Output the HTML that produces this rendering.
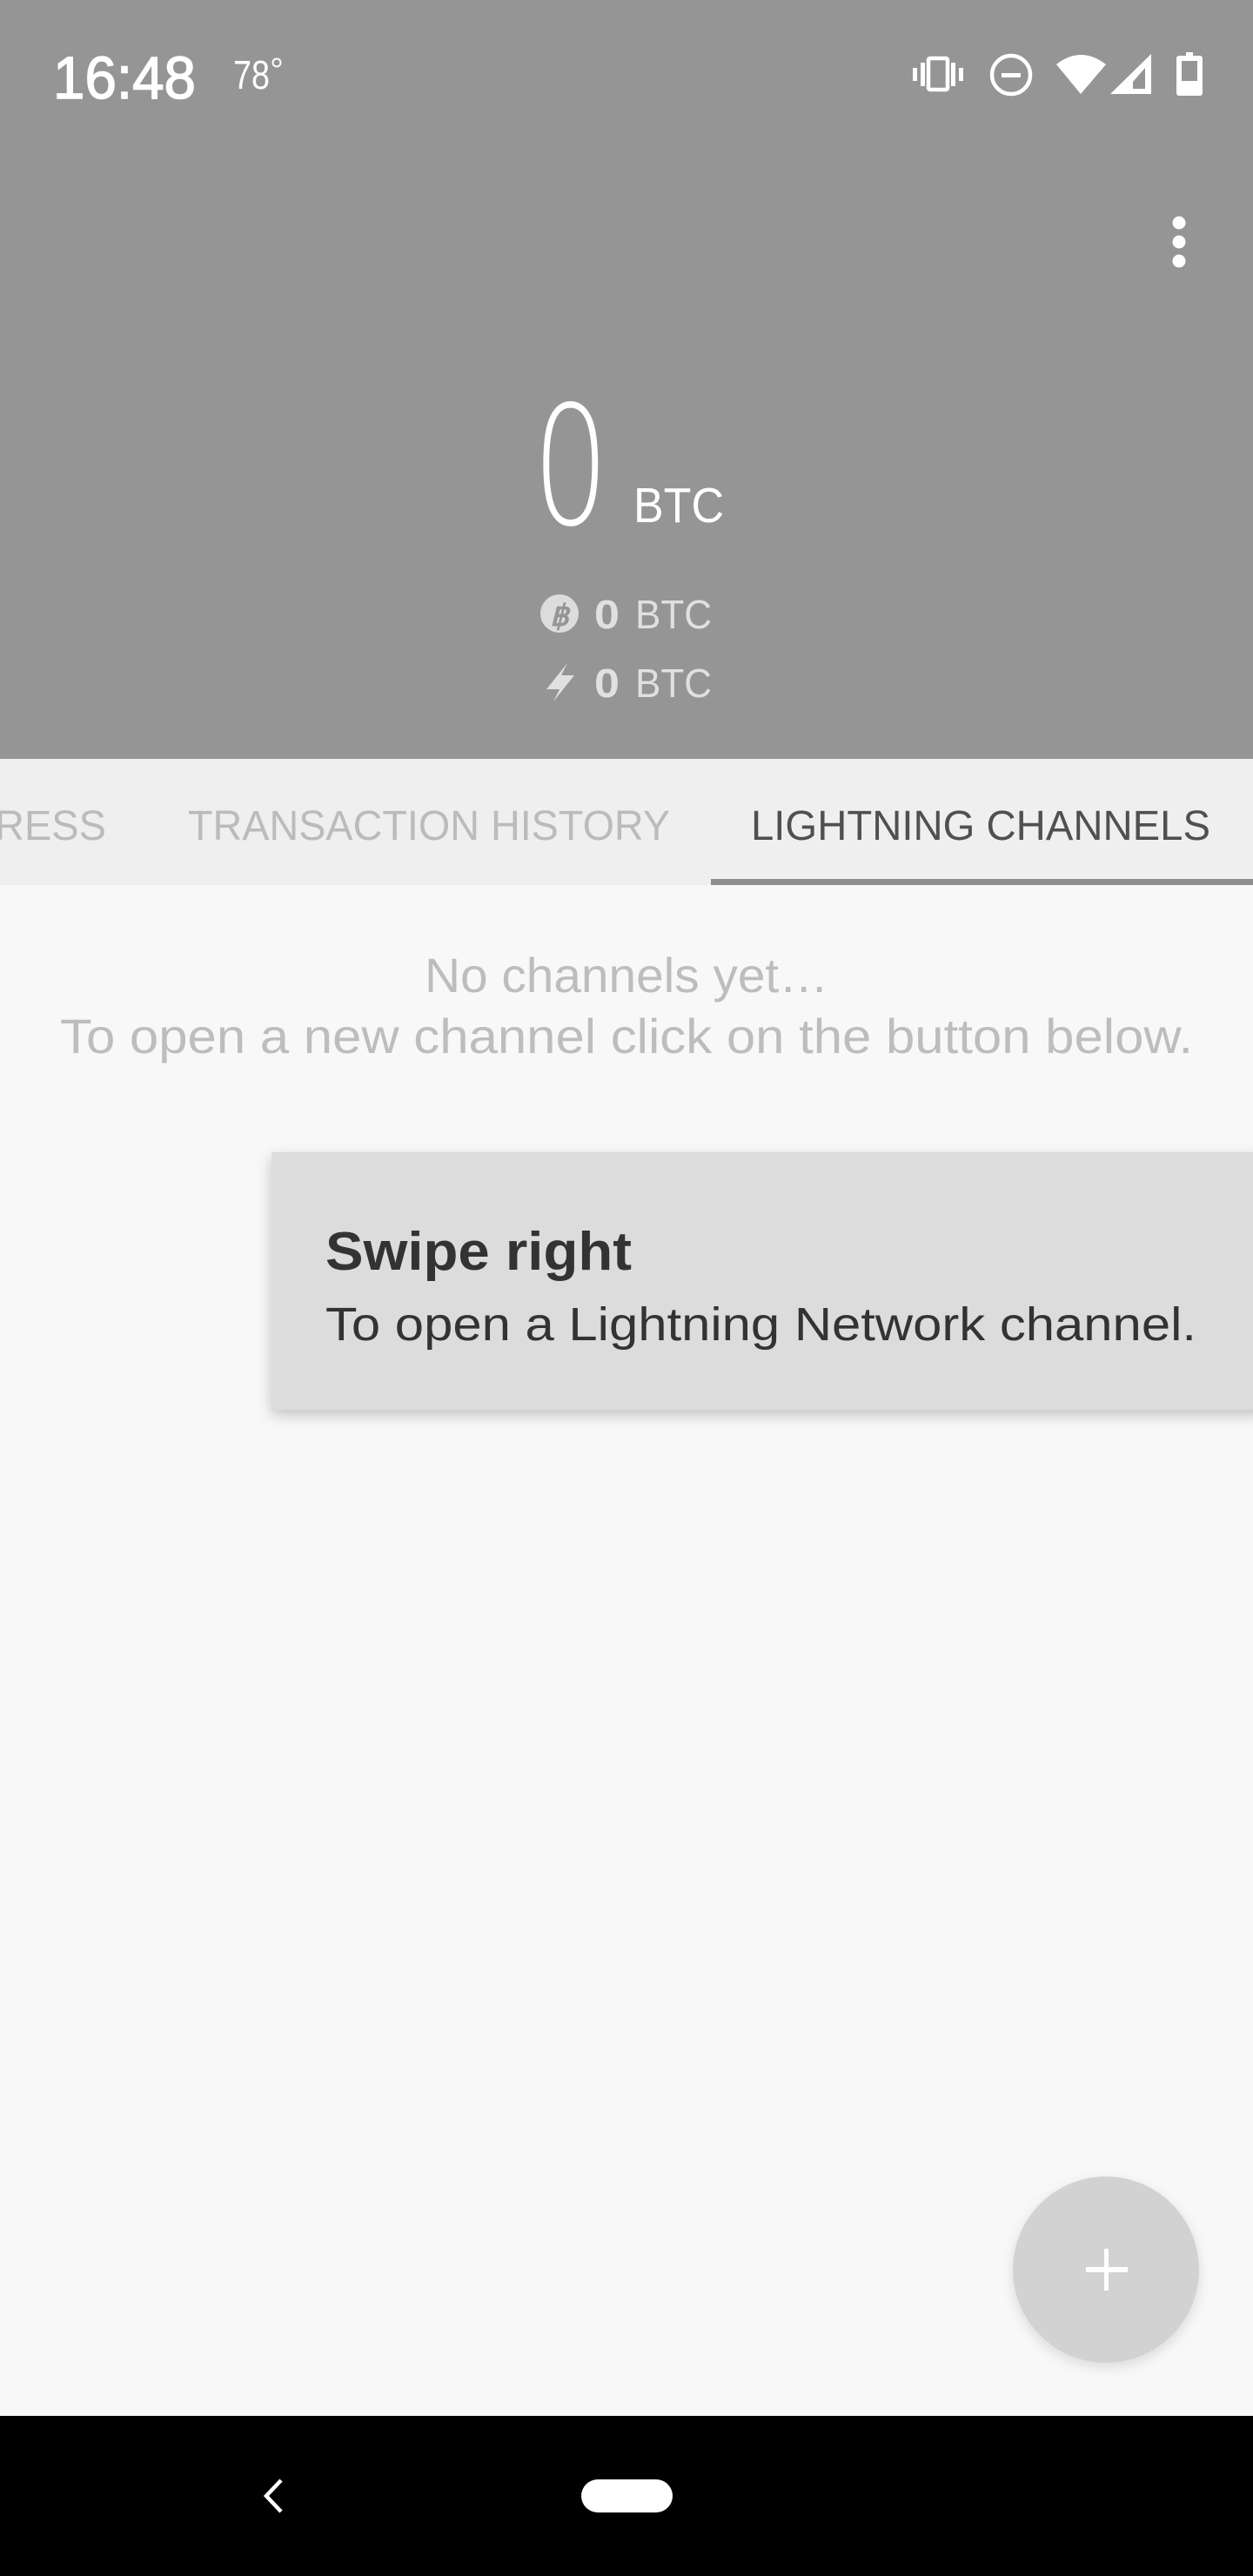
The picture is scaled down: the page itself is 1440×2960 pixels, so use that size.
<!DOCTYPE html>
<html><head><meta charset="utf-8"><style>
html,body{margin:0;padding:0;width:1440px;height:2960px;overflow:hidden;background:#f8f8f8}
svg{display:block}
text{font-family:"Liberation Sans",sans-serif}
</style></head><body>
<svg width="1440" height="2960" viewBox="0 0 1440 2960" xmlns="http://www.w3.org/2000/svg">
<defs>
<filter id="sh" x="-10%" y="-20%" width="130%" height="150%"><feDropShadow dx="0" dy="6" stdDeviation="8" flood-color="#000" flood-opacity="0.22"/></filter>
<filter id="sh2" x="-20%" y="-20%" width="140%" height="140%"><feDropShadow dx="0" dy="5" stdDeviation="7" flood-color="#000" flood-opacity="0.12"/></filter>
</defs>
<rect x="0" y="0" width="1440" height="2960" fill="#f8f8f8"/>
<rect x="0" y="0" width="1440" height="872" fill="#959595"/>
<text x="61" y="113" font-size="69" fill="#fff" stroke="#fff" stroke-width="1.5" textLength="164" lengthAdjust="spacingAndGlyphs">16:48</text>
<text x="268" y="102" font-size="46" fill="#fff" textLength="42" lengthAdjust="spacingAndGlyphs">78</text>
<circle cx="318" cy="72" r="4.5" fill="none" stroke="#fff" stroke-width="2"/>
<g fill="#fff">
<rect x="1049" y="78" width="5" height="15"/><rect x="1058" y="72" width="5" height="27"/>
<rect x="1067" y="67" width="22" height="36" rx="2" fill="none" stroke="#fff" stroke-width="4.5"/>
<rect x="1093" y="72" width="5" height="27"/><rect x="1102" y="78" width="5" height="15"/>
<circle cx="1162" cy="86" r="22" fill="none" stroke="#fff" stroke-width="4.5"/>
<rect x="1151" y="84" width="22" height="5"/>
<path d="M1214 74 Q1242 52 1271 74 L1242 108 Z"/>
<path d="M1323 62 L1323 108 L1276 108 Z M1316 78 L1302 94 L1302 102 L1316 102 Z" fill-rule="evenodd"/>
<path d="M1363 60 h8 v4 h8 a3 3 0 0 1 3 3 v40 a3 3 0 0 1 -3 3 h-24 a3 3 0 0 1 -3 -3 v-40 a3 3 0 0 1 3 -3 h8 Z M1358 70 v23 h18 v-23 Z" fill-rule="evenodd"/>
<circle cx="1355" cy="256" r="7.5"/><circle cx="1355" cy="278" r="7.5"/><circle cx="1355" cy="300" r="7.5"/>
</g>
<text x="612" y="602" font-size="190" fill="#fff" textLength="88" lengthAdjust="spacingAndGlyphs" style="font-family:'DejaVu Sans','Liberation Sans',sans-serif;font-weight:200">0</text>
<text x="728" y="600" font-size="57" fill="#fff" textLength="104" lengthAdjust="spacingAndGlyphs">BTC</text>
<circle cx="643" cy="705" r="22" fill="#dcdcdc"/>
<text x="643" y="719" font-size="34" font-weight="bold" font-style="italic" fill="#959595" text-anchor="middle">฿</text>
<text x="683" y="722" font-size="46" font-weight="bold" fill="#e0e0e0" textLength="29" lengthAdjust="spacingAndGlyphs">0</text>
<text x="730" y="722" font-size="46" fill="#e0e0e0" textLength="88" lengthAdjust="spacingAndGlyphs">BTC</text>
<path d="M652 762 L628 792 L643 792 L636 806 L660 776 L645 776 Z" fill="#e0e0e0"/>
<text x="683" y="801" font-size="46" font-weight="bold" fill="#e0e0e0" textLength="29" lengthAdjust="spacingAndGlyphs">0</text>
<text x="730" y="801" font-size="46" fill="#e0e0e0" textLength="88" lengthAdjust="spacingAndGlyphs">BTC</text>
<rect x="0" y="872" width="1440" height="145" fill="#efefef"/>
<text x="-6" y="965" font-size="48" fill="#bbb" textLength="128" lengthAdjust="spacingAndGlyphs">RESS</text>
<text x="216" y="965" font-size="48" fill="#bbb" textLength="554" lengthAdjust="spacingAndGlyphs">TRANSACTION HISTORY</text>
<text x="863" y="965" font-size="48" fill="#505050" textLength="528" lengthAdjust="spacingAndGlyphs">LIGHTNING CHANNELS</text>
<rect x="817" y="1010" width="623" height="7" fill="#8e8e8e"/>
<text x="720" y="1140" font-size="56" fill="#bdbdbd" text-anchor="middle" textLength="464" lengthAdjust="spacingAndGlyphs">No channels yet…</text>
<text x="69" y="1210" font-size="56" fill="#bdbdbd" textLength="1302" lengthAdjust="spacingAndGlyphs">To open a new channel click on the button below.</text>
<rect x="312" y="1324" width="1140" height="296" fill="#dcdcdc" filter="url(#sh)"/>
<text x="374" y="1459" font-size="62" font-weight="bold" fill="#333" textLength="352" lengthAdjust="spacingAndGlyphs">Swipe right</text>
<text x="374" y="1540" font-size="54" fill="#333" textLength="1001" lengthAdjust="spacingAndGlyphs">To open a Lightning Network channel.</text>
<circle cx="1271" cy="2608" r="107" fill="#d2d2d2" filter="url(#sh2)"/>
<rect x="1248" y="2605" width="48" height="6" fill="#fff"/>
<rect x="1269" y="2584" width="5" height="48" fill="#fff"/>
<rect x="0" y="2776" width="1440" height="184" fill="#000"/>
<path d="M323 2850 L306 2868 L323 2886" fill="none" stroke="#fff" stroke-width="4.5"/>
<rect x="668" y="2849" width="105" height="38" rx="19" fill="#fff"/>
</svg>
</body></html>
